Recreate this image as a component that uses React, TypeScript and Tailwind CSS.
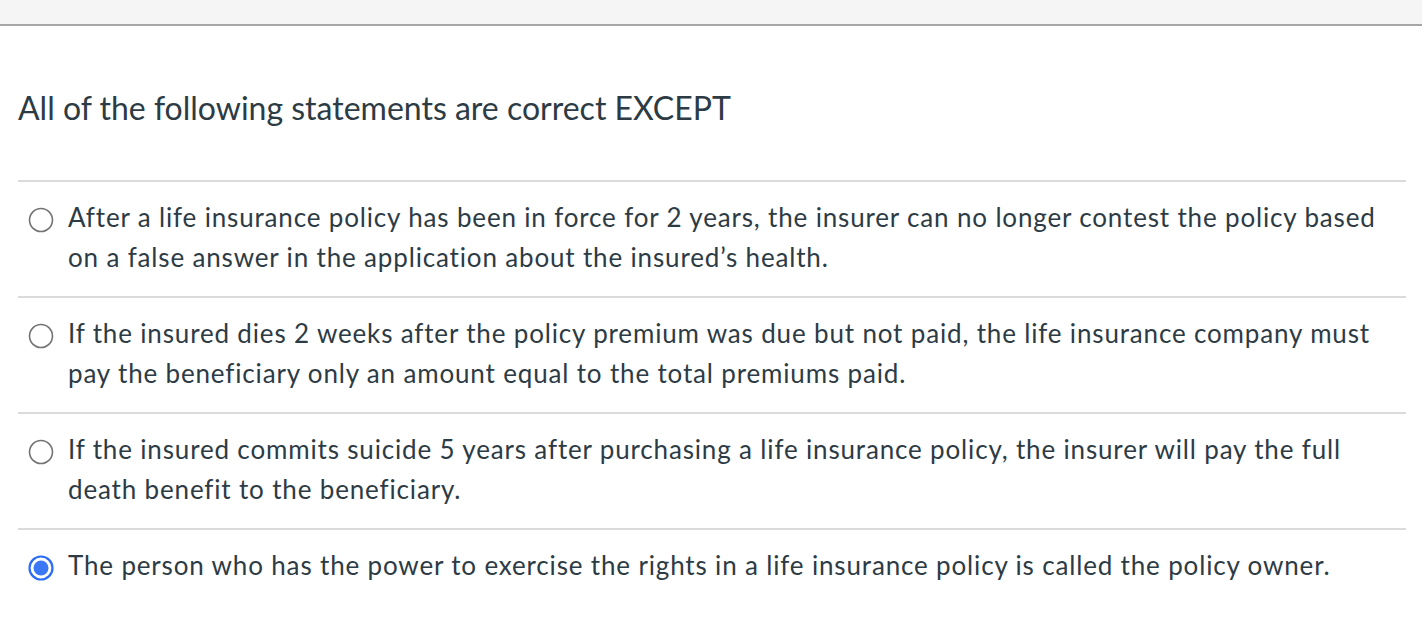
import React from "react";

const options = [
  {
    text: "After a life insurance policy has been in force for 2 years, the insurer can no longer contest the policy based on a false answer in the application about the insured’s health.",
    selected: false,
  },
  {
    text: "If the insured dies 2 weeks after the policy premium was due but not paid, the life insurance company must pay the beneficiary only an amount equal to the total premiums paid.",
    selected: false,
  },
  {
    text: "If the insured commits suicide 5 years after purchasing a life insurance policy, the insurer will pay the full death benefit to the beneficiary.",
    selected: false,
  },
  {
    text: "The person who has the power to exercise the rights in a life insurance policy is called the policy owner.",
    selected: true,
  },
];

function Radio({ selected }: { selected: boolean }) {
  if (selected) {
    return (
      <svg width="26" height="26" viewBox="0 0 26 26" className="shrink-0">
        <circle cx="13" cy="13" r="11.5" fill="white" stroke="#2b6cf6" strokeWidth="2.2" />
        <circle cx="13" cy="13" r="7.5" fill="#3b78f6" />
      </svg>
    );
  }
  return (
    <svg width="26" height="26" viewBox="0 0 26 26" className="shrink-0">
      <circle cx="13" cy="13" r="11.5" fill="white" stroke="#737373" strokeWidth="1.6" />
    </svg>
  );
}

export default function App() {
  return (
    <div className="w-full min-h-[620px] bg-white text-[#2d3b45]" style={{ fontFamily: "Lato, 'Open Sans', sans-serif" }}>
      <div className="h-[26px] bg-[#f5f5f5] border-b-2 border-[#a6a6a6]" />
      <div className="pl-[18px] pt-[62px] pb-[52px] text-[32px] leading-[40px]">
        All of the following statements are correct EXCEPT
      </div>
      <div className="ml-[18px] mr-[16px]">
        {options.map((o, i) => (
          <div key={i} className="border-t-2 border-[#dadada] pt-[15px] pb-[19px] flex gap-[14px] pl-[10px] min-h-[116px]">
            <div className="h-[40px] mt-[3px] flex items-center">
              <Radio selected={o.selected} />
            </div>
            <div className="text-[26px] leading-[40px] tracking-[0.84px] pr-[20px]">{o.text}</div>
          </div>
        ))}
      </div>
    </div>
  );
}
